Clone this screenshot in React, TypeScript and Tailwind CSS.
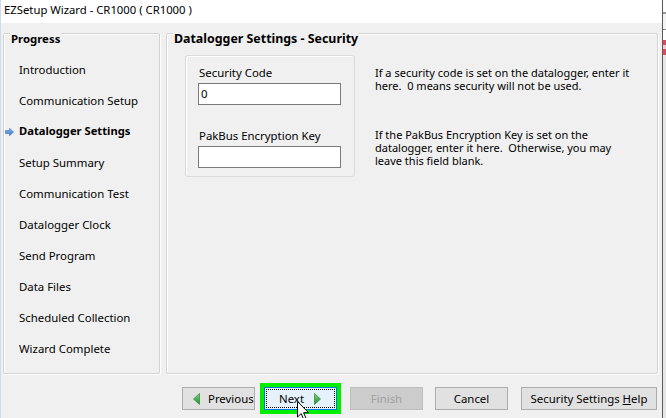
import React from 'react';

const steps = [
  'Introduction',
  'Communication Setup',
  'Datalogger Settings',
  'Setup Summary',
  'Communication Test',
  'Datalogger Clock',
  'Send Program',
  'Data Files',
  'Scheduled Collection',
  'Wizard Complete',
];
const currentStep = 'Datalogger Settings';

function cn(...parts: (string | false | undefined)[]) {
  return parts.filter(Boolean).join(' ');
}

interface GroupBoxProps {
  title: string;
  className?: string;
  titleClass?: string;
  children?: React.ReactNode;
}

// etched WinForms-style group box, caption sits on the top border
const GroupBox: React.FC<GroupBoxProps> = ({ title, className, titleClass, children }) => (
  <div
    className={cn(
      'rounded-[2px] border border-[#d3d3d3] shadow-[inset_1px_1px_0_#ffffff,1px_1px_0_#ffffff]',
      className
    )}
  >
    <div className={cn('-mt-[2px] ml-[6px] h-[14px] w-fit bg-[#f0f0f0] px-[1px] font-bold leading-[14px]', titleClass)}>
      {title}
    </div>
    {children}
  </div>
);

const StepArrow = () => (
  <svg width="9" height="8" viewBox="0 0 9 8">
    <defs>
      <linearGradient id="stepArrow" x1="0" y1="0" x2="0" y2="1">
        <stop offset="0" stopColor="#8fc0f2" />
        <stop offset="1" stopColor="#2f6fc9" />
      </linearGradient>
    </defs>
    <path d="M0.5 2.5 H4.5 V0.3 L8.6 4 L4.5 7.7 V5.5 H0.5 Z" fill="url(#stepArrow)" stroke="#3d74c2" strokeWidth="0.6" />
  </svg>
);

const GreenTriangle = ({ dir }: { dir: 'left' | 'right' }) => (
  <svg width="7" height="12" viewBox="0 0 7 12">
    <defs>
      <linearGradient id={dir === 'left' ? 'gl' : 'gr'} x1="0" y1="0" x2="0" y2="1">
        <stop offset="0" stopColor="#7fd27f" />
        <stop offset="1" stopColor="#1f8a2a" />
      </linearGradient>
    </defs>
    <path
      d={dir === 'left' ? 'M6.5 0.5 V11.5 L0.5 6 Z' : 'M0.5 0.5 V11.5 L6.5 6 Z'}
      fill={dir === 'left' ? 'url(#gl)' : 'url(#gr)'}
      stroke="#2d8a34"
      strokeWidth="0.7"
    />
  </svg>
);

const Pointer = () => (
  <svg width="13" height="20" viewBox="0 0 13 20" className="absolute left-[297px] top-[401px]">
    <path
      d="M0.5 0.5 L0.5 16 L4.2 12.6 L6.9 18.8 L9.2 17.8 L6.6 11.7 L11.5 11.7 Z"
      fill="#ffffff"
      stroke="#000000"
      strokeWidth="1"
      strokeLinejoin="round"
    />
  </svg>
);

export default function App() {
  return (
    <div className="relative flex h-[418px] w-[666px] overflow-hidden bg-[#f0f0f0] font-['Segoe_UI','Noto_Sans',sans-serif] text-[11.4px] text-black">
      {/* wizard window */}
      <div className="flex w-[663px] flex-col border-l border-r border-l-[#cddbea] border-r-[#5a5a5a]">
        <div className="h-[23px] bg-white pl-[3px] text-[11.3px] leading-[20px]">EZSetup Wizard - CR1000 ( CR1000 )</div>

        <div className="flex flex-1 flex-col bg-[#f0f0f0]">
          <div className="mt-[10px] flex h-[341px] pl-[2px]">
            {/* Progress */}
            <GroupBox title="Progress" className="w-[157px]">
              <div className="mt-[8px] flex flex-col">
                {steps.map((s) => {
                  const active = s === currentStep;
                  return (
                    <div key={s} className="flex h-[31px] items-center">
                      <div className="flex w-[15px] justify-start pl-[1px]">{active && <StepArrow />}</div>
                      <span className={cn('whitespace-nowrap', active && 'font-bold text-[11.2px]')}>{s}</span>
                    </div>
                  );
                })}
              </div>
            </GroupBox>

            {/* Security page */}
            <GroupBox title="Datalogger Settings - Security" className="ml-[6px] w-[492px]" titleClass="text-[12.4px]">
              <div className="mt-[9px] flex">
                <div className="ml-[18px] w-[170px] rounded-[3px] border border-[#dadada] pb-[8px] pl-[12px] pt-[10px] shadow-[inset_1px_1px_0_#ffffff]">
                  <div className="pl-[1px] leading-[14px]">Security Code</div>
                  <div className="mt-[3px] h-[22px] w-[143px] border border-[#7a7a7a] bg-white pl-[2px] leading-[20px]">0</div>
                  <div className="mt-[24px] pl-[1px] leading-[14px]">PakBus Encryption Key</div>
                  <div className="mt-[3px] h-[22px] w-[143px] border border-[#7a7a7a] bg-white" />
                </div>

                <div className="ml-[20px] flex flex-col whitespace-pre text-[11px] leading-[13px]">
                  <p className="mt-[11px]">
                    {'If a security code is set on the datalogger, enter it\nhere.  0 means security will not be used.'}
                  </p>
                  <p className="mt-[36px]">
                    {'If the PakBus Encryption Key is set on the\ndatalogger, enter it here.  Otherwise, you may\nleave this field blank.'}
                  </p>
                </div>
              </div>
            </GroupBox>
          </div>

          {/* buttons */}
          <div className="mt-[13px] flex pl-[181px]">
            <div className="flex h-[23px] w-[73px] items-center border border-[#adadad] bg-[#e1e1e1] pl-[10px]">
              <GreenTriangle dir="left" />
              <span className="ml-[8px]">Previous</span>
            </div>
            <div className="ml-[9px] h-[23px] w-[73px] border border-[#0078d7] bg-[#e5f1fb] p-[1px] outline-[4px] outline-[#00ee00] outline-solid">
              <div className="flex h-full items-center border border-dotted border-black pl-[12px]">
                <span>Next</span>
                <span className="ml-[10px]">
                  <GreenTriangle dir="right" />
                </span>
              </div>
            </div>
            <div className="ml-[13px] flex h-[23px] w-[73px] items-center justify-center border border-[#bfbfbf] bg-[#cccccc] text-[#a0a0a0]">
              Finish
            </div>
            <div className="ml-[12px] flex h-[23px] w-[73px] items-center justify-center border border-[#adadad] bg-[#e1e1e1]">
              Cancel
            </div>
            <div className="ml-[13px] flex h-[23px] w-[136px] items-center justify-center border border-[#adadad] bg-[#e1e1e1]">
              <span>
                Security Settings <span className="underline">H</span>elp
              </span>
            </div>
          </div>
        </div>
      </div>

      {/* edge of the window behind */}
      <div className="flex flex-1 flex-col bg-[#ececec]">
        <div className="h-[12px] bg-white" />
        <div className="h-[2px] bg-[#9a9a9a]" />
        <div className="h-[15px] bg-[#f4f4f4]" />
        <div className="h-[1px] bg-[#8c8c8c]" />
        <div className="h-[10px] bg-white" />
        <div className="h-[5px] bg-[#e3485a]" />
        <div className="h-[4px] bg-[#f7c9cf]" />
        <div className="h-[6px] bg-[#e3485a]" />
        <div className="flex-1 bg-[#e6e6e6]" />
      </div>

      <Pointer />
    </div>
  );
}
